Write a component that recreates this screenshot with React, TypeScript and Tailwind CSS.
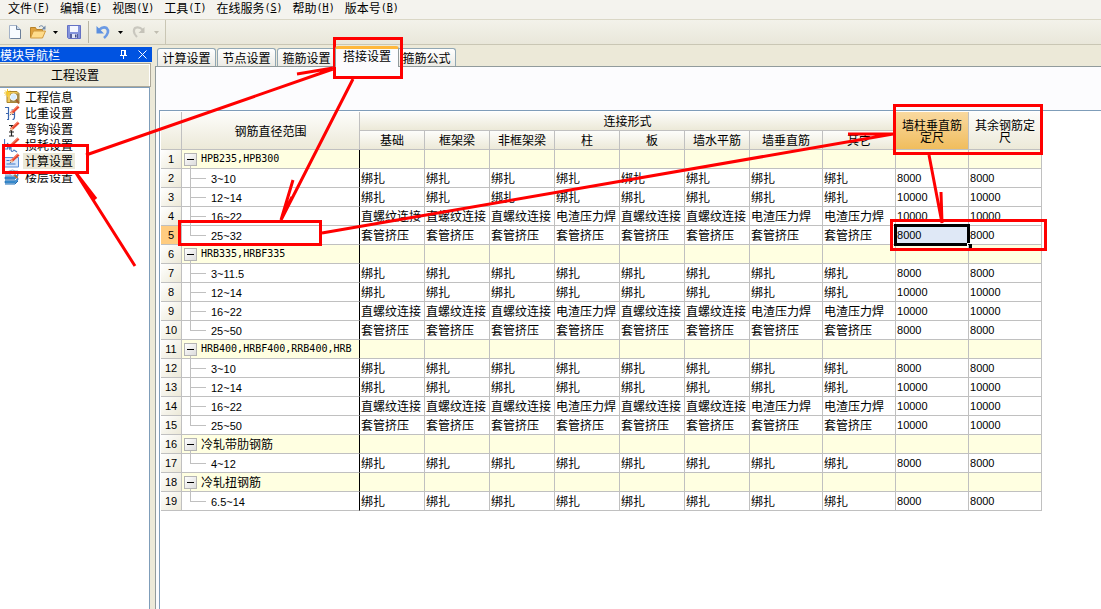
import React, { useState } from "react";
import clsx from "clsx";

const MENUS = [
  ["文件", "F"],
  ["编辑", "E"],
  ["视图", "V"],
  ["工具", "T"],
  ["在线服务", "S"],
  ["帮助", "H"],
  ["版本号", "B"],
];

const TABS = ["计算设置", "节点设置", "箍筋设置", "搭接设置", "箍筋公式"];

const FORMS = ["基础", "框架梁", "非框架梁", "柱", "板", "墙水平筋", "墙垂直筋", "其它"];

type Row = { label: string; group?: boolean; last?: boolean; kind?: Kind; length?: string };
type Kind = "tie" | "thread" | "sleeve";

const ROWS: Row[] = [
  { label: "HPB235,HPB300", group: true },
  { label: "3~10", kind: "tie", length: "8000" },
  { label: "12~14", kind: "tie", length: "10000" },
  { label: "16~22", kind: "thread", length: "10000" },
  { label: "25~32", kind: "sleeve", length: "8000", last: true },
  { label: "HRB335,HRBF335", group: true },
  { label: "3~11.5", kind: "tie", length: "8000" },
  { label: "12~14", kind: "tie", length: "10000" },
  { label: "16~22", kind: "thread", length: "10000" },
  { label: "25~50", kind: "sleeve", length: "8000", last: true },
  { label: "HRB400,HRBF400,RRB400,HRB", group: true },
  { label: "3~10", kind: "tie", length: "8000" },
  { label: "12~14", kind: "tie", length: "10000" },
  { label: "16~22", kind: "thread", length: "10000" },
  { label: "25~50", kind: "sleeve", length: "10000", last: true },
  { label: "冷轧带肋钢筋", group: true },
  { label: "4~12", kind: "tie", length: "8000", last: true },
  { label: "冷轧扭钢筋", group: true },
  { label: "6.5~14", kind: "tie", length: "8000", last: true },
];

// 柱, 墙垂直筋 and 其它 use electroslag welding where the others are threaded
const WELDED = [3, 6, 7];

function joint(kind: Kind | undefined, col: number) {
  if (kind === "tie") return "绑扎";
  if (kind === "sleeve") return "套管挤压";
  if (kind === "thread") return WELDED.includes(col) ? "电渣压力焊" : "直螺纹连接";
  return "";
}

const LATIN = "font-['DejaVu_Sans_Mono',monospace] text-[10px]";
const DIGITS = "font-['Liberation_Sans',sans-serif] text-[11px]";
const HEAD = "border-r border-b border-[#c0c0c0] bg-linear-to-b from-[#fdfdfb] to-[#ece9d8] p-0 text-center font-normal";

const Icon: React.FC<{ children: React.ReactNode }> = ({ children }) => (
  <svg viewBox="0 0 16 16" className="size-4 shrink-0" fill="none" aria-hidden="true">
    {children}
  </svg>
);

const Pencil = () => (
  <>
    <path d="M14.5 1.5 7 8.5" stroke="#e8452c" strokeWidth="3" />
    <path d="M14 .8 7 7.2" stroke="#ff9a85" strokeWidth="1" />
    <path d="m7.8 6.8-2.3 3.7 3.8-2.2z" fill="#f2c79a" />
    <path d="m5.5 10.5 1-1.6.7.7z" fill="#333" />
  </>
);

const NAV = [
  {
    label: "工程信息",
    icon: (
      <Icon>
        <path d="M3 2.500h10l2 2v9H3z" fill="#f0c95c" stroke="#a9822b" />
        <path d="M6 4.500h9v9H6z" fill="#a48a4c" />
        <circle cx="9.500" cy="8" r="3.200" fill="#d5ebff" stroke="#f4f9ff" />
        <path d="m12 10.500 3 4" stroke="#a35e2a" strokeWidth="2" />
        <path d="M3.500 0v8M0 4h7M1 1.500l5 5M6 1.500l-5 5" stroke="#f7c928" />
      </Icon>
    ),
  },
  {
    label: "比重设置",
    icon: (
      <Icon>
        <path d="M1 2.500h3.500v12H3M2 8.500h2M7.500 5h3v7q0 2.500-2 2.500M8 9.500h2" stroke="#3a66b0" strokeWidth="1.200" />
        <Pencil />
      </Icon>
    ),
  },
  {
    label: "弯钩设置",
    icon: (
      <Icon>
        <path d="M5 4.500h5M7.500 5v10M5 15h5M5 11h5" stroke="#222" strokeWidth="1.200" />
        <Pencil />
      </Icon>
    ),
  },
  {
    label: "损耗设置",
    icon: (
      <Icon>
        <path d="M.5 2v10h3V6l2 6 1.500-3v4q1 3 3 0l3 2" stroke="#4a78bd" strokeWidth="1.200" />
        <Pencil />
      </Icon>
    ),
  },
  {
    label: "计算设置",
    icon: (
      <Icon>
        <path d="M.5 4.500h14v9.500H.5z" fill="#d6e6fb" stroke="#5b8fd6" />
        <path d="M2.500 7.500h3M2.500 11h9" stroke="#3f78c8" />
        <Pencil />
      </Icon>
    ),
  },
  {
    label: "楼层设置",
    icon: (
      <Icon>
        <path d="m1 5 4-3h9l-3 3zM1 8h10l3-3v2l-3 3H1zM1 12h10l3-3v2l-3 3H1z" fill="#3d94d8" stroke="#1e68ad" strokeWidth=".6" />
        <path d="M1 7h10M1 11h10M1 15h10l3-3" stroke="#1d6fb8" />
        <circle cx="8.500" cy="4" r="3" fill="#dceefd" stroke="#8ba7c0" />
        <path d="m10.500 6 3 3" stroke="#b36a34" strokeWidth="2" />
      </Icon>
    ),
  },
];

const Caret: React.FC<{ className: string }> = ({ className }) => (
  <svg viewBox="0 0 5 3" className={clsx("h-[3px] w-[5px] shrink-0", className)} aria-hidden="true">
    <path d="M0 0h5L2.500 3z" fill="currentColor" />
  </svg>
);

function Toolbar() {
  return (
    <div className="flex h-[26px] items-stretch border-t border-b border-t-[#dad7c6] border-b-[#c9c6b4] bg-linear-to-b from-[#f3f2ea] to-[#e9e7da]">
      <div className="flex w-[166px] items-center border-r border-[#c9c6b4] pl-[7px]">
        <button type="button" aria-label="新建" className="flex">
          <Icon>
            <path d="M2.500 1.500h7l4 4v9h-11z" fill="#f7fbff" stroke="#a3b2c8" />
            <path d="M9.500 1.500v4h4" fill="#cbd9ea" stroke="#6b7f99" />
            <path d="M13.500 6v8.500h-10" stroke="#6b7f99" />
          </Icon>
        </button>
        <button type="button" aria-label="打开" className="ml-[7px] flex">
          <Icon>
            <path d="M.5 13.500v-10h5l1 2h6v8z" fill="#e0a23c" stroke="#b98328" />
            <path d="m.5 14 3-7H15.500l-3 7z" fill="#ffdc8a" stroke="#d19a3f" />
            <path d="M9 3q3-3 5 1" stroke="#7189a8" />
            <path d="M15.500 1.500v4h-4z" fill="#7189a8" />
          </Icon>
        </button>
        <Caret className="ml-[7px] text-black" />
        <button type="button" aria-label="保存" className="ml-2 flex">
          <Icon>
            <path d="M1.500 1.500h13v13h-12l-1-1z" fill="#8494dc" stroke="#6471c4" />
            <path d="M4 2h8v6H4z" fill="#f4f7ff" />
            <path d="M4 10h8v4H4z" fill="#55609c" />
            <path d="M6 10h5v4H6z" fill="#dfe5f7" />
            <path d="M9 10.500h1.500v3H9z" fill="#3f4a86" />
          </Icon>
        </button>
        <span className="ml-[6px] h-[22px] w-px bg-[#b8b5a4]" />
        <button type="button" aria-label="撤销" className="ml-[6px] flex">
          <Icon>
            <path d="M4 6q4-4 7.500-2 4 4-2.500 10" stroke="#6b9ae4" strokeWidth="2.600" />
            <path d="M1.500 2v7.500H9z" fill="#5b8fe0" />
          </Icon>
        </button>
        <Caret className="ml-[7px] text-black" />
        <button type="button" aria-label="重做" className="ml-2 flex">
          <Icon>
            <path d="M12 6q-4-4-8-2-3 4 2 9" stroke="#c9c7be" strokeWidth="2.200" />
            <path d="M13.500 3v6h-6z" fill="#c5c3b9" />
          </Icon>
        </button>
        <Caret className="ml-[7px] text-[#c0bdb0]" />
      </div>
    </div>
  );
}

function Sidebar() {
  return (
    <aside className="flex w-[152px] shrink-0 flex-col pt-px">
      <div className="flex h-[15px] items-center bg-[#0053e1] leading-[15px] text-white">
        <span>模块导航栏</span>
        <button type="button" aria-label="固定" className="ml-auto">
          <svg viewBox="0 0 9 9" className="size-[9px]" fill="none" stroke="currentColor">
            <path d="M2.500 0v5M5.500 0v5M6.500 0v5M2 .5h5M1 5.500h7M4.500 6v3" />
          </svg>
        </button>
        <button type="button" aria-label="关闭" className="mr-[5px] ml-[10px]">
          <svg viewBox="0 0 9 9" className="size-[9px]" fill="none" stroke="currentColor">
            <path d="m.5.5 8 8M8.500.5l-8 8" />
          </svg>
        </button>
      </div>
      <button
        type="button"
        className="mt-px mr-px h-6 border border-l-0 border-[#aca899] bg-[#ece9d8] pb-px shadow-[inset_0_1px_0_#fff,inset_-1px_0_0_#fff]"
      >
        工程设置
      </button>
      <nav className="mr-[2px] flex-1 border-t border-r border-[#7f9db9] bg-white pt-px">
        {NAV.map((item) => (
          <a key={item.label} href="#" className="flex h-4 items-center pl-1">
            {item.icon}
            <span className={clsx("ml-[3px] h-4 px-[2px] leading-4", item.label === "计算设置" && "bg-[#ece9d8]")}>
              {item.label}
            </span>
          </a>
        ))}
      </nav>
    </aside>
  );
}

function TreeCell({ row }: { row: Row }) {
  if (row.group) {
    return (
      <div className="flex h-[18px] items-center overflow-hidden">
        <div className="ml-[2px] flex h-full w-[13px] flex-col pt-[3px]">
          <button
            type="button"
            aria-label="折叠"
            className="flex size-[13px] shrink-0 items-center justify-center border border-[#b4b4b4] bg-linear-to-br from-white to-[#dcdcdc]"
          >
            <span className="h-px w-[7px] bg-black" />
          </button>
          <span className="ml-[6px] w-px flex-1 bg-[#c0c0c0]" />
        </div>
        <span className={clsx("ml-1 whitespace-nowrap", /^[A-Z]/.test(row.label) && LATIN)}>{row.label}</span>
      </div>
    );
  }
  return (
    <div className="flex h-[18px] items-center">
      <div className="ml-2 flex h-full w-4 flex-col">
        <span className="h-[10px] border-b border-l border-[#c0c0c0]" />
        <span className={clsx("flex-1", !row.last && "border-l border-[#c0c0c0]")} />
      </div>
      <span className={clsx("ml-[5px] pt-px", DIGITS)}>{row.label}</span>
    </div>
  );
}

function RebarTable() {
  const selected = 4;
  return (
    <table className="w-[881px] table-fixed border-separate border-spacing-0">
      <colgroup>
        <col className="w-[21px]" />
        <col className="w-[178px]" />
        {FORMS.map((f, i) => (
          <col key={f} className={i < 6 ? "w-[65px]" : "w-[73px]"} />
        ))}
        <col className="w-[73px]" />
        <col className="w-[73px]" />
      </colgroup>
      <thead>
        <tr className="h-[19px]">
          <th rowSpan={2} className={HEAD} aria-label="序号" />
          <th rowSpan={2} className={HEAD}>钢筋直径范围</th>
          <th colSpan={8} className={HEAD}>连接形式</th>
          <th rowSpan={2} className="border-r border-b border-[#c0c0c0] bg-linear-to-b from-[#f9d99f] to-[#f0bd5c] px-[6px] py-0 text-center leading-3 font-normal">
            墙柱垂直筋定尺
          </th>
          <th rowSpan={2} className="border-r border-b border-[#c0c0c0] bg-linear-to-b from-[#fdfdfb] to-[#ece9d8] px-[6px] py-0 text-center leading-3 font-normal">
            其余钢筋定尺
          </th>
        </tr>
        <tr className="h-[19px]">
          {FORMS.map((f) => (
            <th key={f} className={HEAD}>{f}</th>
          ))}
        </tr>
      </thead>
      <tbody>
        {ROWS.map((row, i) => (
          <tr key={i} className={clsx("h-[19px]", row.group ? "bg-[#ffffe1]" : "bg-white")}>
            <th
              className={clsx(
                "border-r border-b border-[#c0c0c0] p-0 text-center font-normal",
                DIGITS,
                i === selected ? "bg-[#ffcc80]" : "bg-linear-to-br from-white to-[#ece9d8]"
              )}
            >
              {i + 1}
            </th>
            <td className="border-r border-b border-r-black border-b-[#c0c0c0] p-0">
              <TreeCell row={row} />
            </td>
            {FORMS.map((f, col) => (
              <td key={f} className="border-r border-b border-[#c0c0c0] p-0 pl-px whitespace-nowrap">
                {joint(row.kind, col)}
              </td>
            ))}
            <td className={clsx("relative border-r border-b border-[#c0c0c0] p-0 pl-px", DIGITS, i === selected && "bg-[#dfe8f6]")}>
              {row.length}
              {i === selected && (
                <>
                  <span className="absolute -inset-[2px] border-[3px] border-black" />
                  <span className="absolute -right-[4px] -bottom-[4px] size-[5px] border-t border-l border-white bg-black" />
                </>
              )}
            </td>
            <td className={clsx("border-r border-b border-[#c0c0c0] p-0 pl-px", DIGITS)}>{row.length}</td>
          </tr>
        ))}
      </tbody>
    </table>
  );
}

// Red pen marks drawn over the window
function Markup() {
  return (
    <svg className="pointer-events-none absolute top-0 left-0 h-[300px] w-[1101px]" fill="none" stroke="#ff0000" strokeWidth="3" aria-hidden="true">
      <rect x="3.500" y="145.500" width="84" height="27" />
      <rect x="334.500" y="38.500" width="67" height="39" />
      <rect x="179.500" y="221.500" width="141" height="23" />
      <rect x="894.500" y="105.500" width="147" height="48" />
      <rect x="891.500" y="220.500" width="154" height="29" />
      <path d="M86 155 333 69M297 74l36-6" />
      <path d="m353 79-72 141 12-40M283 216l9-19" />
      <path d="m322 233 571-99h-45" />
      <path d="m929 155 13 68-1-31" />
      <path d="m76 173 59 93M76 173l20 26" />
    </svg>
  );
}

export default function App() {
  const [tab, setTab] = useState("搭接设置");

  return (
    <div className="relative flex h-screen flex-col overflow-hidden bg-[#ece9d8] font-['Noto_Sans_CJK_SC',sans-serif] text-[12px] leading-4 text-black">
      <div className="flex h-[19px] items-start gap-[10px] bg-[#f4f3ee] pl-2">
        {MENUS.map(([name, key]) => (
          <button key={key} type="button" className="flex h-4 items-center whitespace-nowrap">
            {name}
            <span className={LATIN}>
              (<u>{key}</u>)
            </span>
          </button>
        ))}
      </div>
      <Toolbar />
      <div className="flex min-h-0 flex-1 pt-px">
        <Sidebar />
        <main className="ml-[3px] flex min-w-0 flex-1 flex-col">
          <div role="tablist" className="flex h-5 items-end pl-[2px]">
            {TABS.map((name) => (
              <button
                key={name}
                type="button"
                role="tab"
                aria-selected={name === tab}
                onClick={() => setTab(name)}
                className={clsx(
                  "rounded-t-[3px] border border-b-0 text-center whitespace-nowrap",
                  name === tab
                    ? "z-10 -mx-[2px] -mb-px h-[21px] w-16 border-t-[3px] border-[#919b9c] border-t-[#ffb83c] bg-[#fcfcfe] pb-1 leading-[14px]"
                    : "mr-px h-[18px] w-[59px] border-[#91a7b4] bg-linear-to-b from-white to-[#ecebe5]"
                )}
              >
                {name}
              </button>
            ))}
          </div>
          <div className="flex flex-1 flex-col border-t border-l border-[#919b9c] bg-[#fcfcfe] pt-[43px] pl-[3px]">
            <div className="flex-1 border-t border-l border-[#7f9db9] bg-white pt-px pl-px">
              <RebarTable />
            </div>
          </div>
        </main>
      </div>
      <Markup />
    </div>
  );
}
